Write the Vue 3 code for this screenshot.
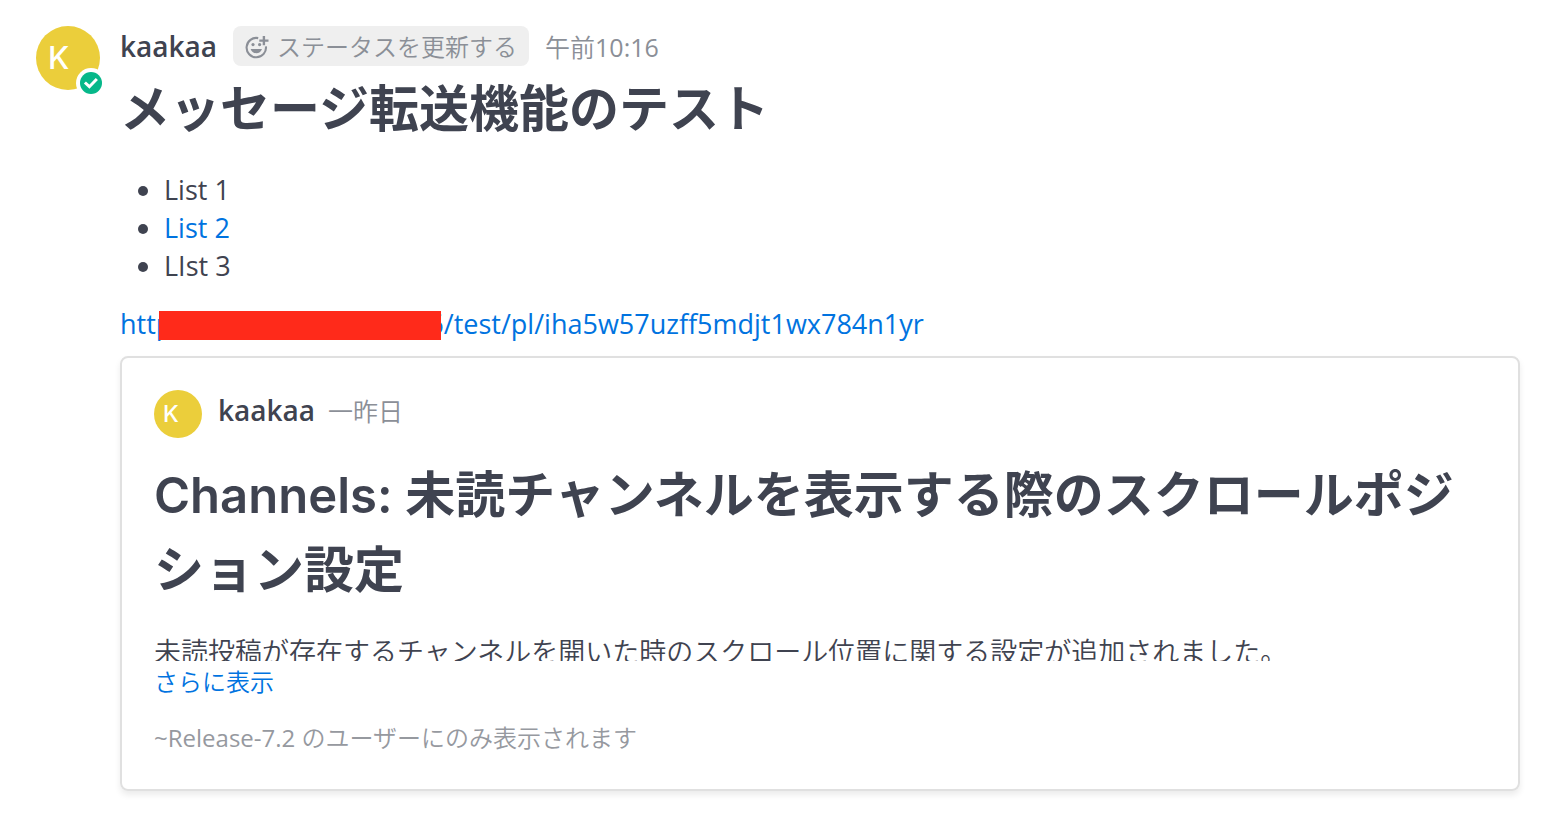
<script setup>
const items = [
  { text: 'List 1' },
  { text: 'List 2', href: '#list-2' },
  { text: 'LIst 3' },
]
</script>

<template>
  <main class="post">
    <div class="avatar">
      <span class="initial">K</span>
      <svg class="online" viewBox="0 0 30 30" role="img" aria-label="Online">
        <circle cx="15" cy="15" r="15" fill="#fff" />
        <circle cx="15" cy="15" r="11" fill="#06b88a" />
        <path d="M10 15.5l3.4 3.2 6.4-6.6" fill="none" stroke="#fff" stroke-width="3" stroke-linecap="square" stroke-linejoin="miter" />
      </svg>
    </div>
    <div class="content">
      <header class="head">
        <strong class="name">kaakaa</strong>
        <button class="status" type="button">
          <svg class="smile" viewBox="0 0 24 24" aria-hidden="true">
            <g fill="none" stroke="#8b8f97" stroke-width="2.1">
              <path d="M13.2 3.1A9.7 9.7 0 1 0 20.9 11.3" />
              <path d="M18.9 1v9.2M14.3 5.6h9.2" stroke-width="2.4" />
            </g>
            <circle cx="8" cy="9.6" r="1.6" fill="#8b8f97" />
            <circle cx="14.6" cy="9.6" r="1.6" fill="#8b8f97" />
            <path d="M5.6 13.9h11.4c-.9 2.7-3 4.3-5.7 4.3s-4.8-1.6-5.7-4.3z" fill="#8b8f97" />
          </svg>
          <span>ステータスを更新する</span>
        </button>
        <time class="time"><span class="kanji">午前</span>10:16</time>
      </header>
      <h1 class="title">メッセージ転送機能のテスト</h1>
      <ul class="list">
        <li v-for="item in items" :key="item.text">
          <a v-if="item.href" :href="item.href">{{ item.text }}</a>
          <template v-else>{{ item.text }}</template>
        </li>
      </ul>
      <p class="url"><a href="#permalink">http<span class="mask"></span>6/test/pl/iha5w57uzff5mdjt1wx784n1yr</a></p>
      <article class="card">
        <header class="card-head">
          <div class="avatar small"><span class="initial">K</span></div>
          <strong class="name">kaakaa</strong>
          <time class="time kanji">一昨日</time>
        </header>
        <div class="excerpt">
          <h1 class="title"><span class="latin">Channels:</span> 未読チャンネルを表示する際のスクロールポジション設定</h1>
          <p class="body kanji">未読投稿が存在するチャンネルを開いた時のスクロール位置に関する設定が追加されました。</p>
        </div>
        <button class="more" type="button">さらに表示</button>
        <footer class="foot">~Release-7.2 <span class="kanji">のユーザーにのみ表示されます</span></footer>
      </article>
    </div>
  </main>
</template>

<style>
body {
  margin: 0;
  background: #fff;
}
</style>

<style scoped>
.post {
  display: flex;
  gap: 20px;
  padding: 26px 42px 22px 36px;
  color: #3f4350;
  font-family: "Open Sans", "Noto Sans CJK JP", sans-serif;
  font-size: 27px;
  line-height: 38px;
}
.content {
  flex: 1;
  min-width: 0;
}
.avatar {
  position: relative;
  flex: none;
  box-sizing: border-box;
  width: 64px;
  height: 64px;
  padding-left: 12px;
  border-radius: 50%;
  background: #ebce3b;
  color: #fff;
  font-family: Inter, sans-serif;
  font-size: 31px;
  font-weight: 500;
  line-height: 64px;
}
.avatar.small {
  width: 48px;
  height: 48px;
  padding-left: 9px;
  font-size: 23px;
  line-height: 48px;
}
.online {
  position: absolute;
  right: -6px;
  bottom: -8px;
  width: 30px;
  height: 30px;
}
.head {
  display: flex;
  align-items: center;
  height: 40px;
}
.name {
  font-size: 28px;
  font-weight: 600;
  line-height: 40px;
}
.status {
  display: flex;
  align-items: center;
  gap: 8px;
  height: 40px;
  margin: 0 16px;
  padding: 2px 12px 0;
  border: 0;
  border-radius: 8px;
  background: #efefef;
  color: #8b8f97;
  font: inherit;
  font-size: 24px;
  font-weight: 350;
}
.smile {
  width: 24px;
  height: 24px;
}
.time {
  padding-top: 2px;
  color: #8b8f97;
  font-size: 25px;
}
.kanji {
  font-weight: 350;
}
.title {
  margin: 6px 0 24px;
  font-family: Inter, "Noto Sans CJK JP", sans-serif;
  font-size: 50px;
  font-weight: 600;
  line-height: 75px;
}
.latin {
  font-size: 49px;
}
.list {
  margin: 0 0 20px;
  padding-left: 44px;
}
a {
  color: #0073e0;
  text-decoration: none;
}
.url {
  margin: 0 0 13px;
  white-space: nowrap;
}
.mask {
  display: inline-block;
  position: relative;
  width: 282px;
  height: 29px;
  margin: 0 -13px;
  background: #ff2a1a;
  vertical-align: -6px;
}
.card {
  padding: 32px;
  border: 2px solid #e0e0e0;
  border-radius: 8px;
  box-shadow: 0 4px 6px rgba(0, 0, 0, 0.08);
}
.card-head {
  display: flex;
  align-items: flex-start;
  height: 48px;
}
.card-head .name {
  margin: 0 13px 0 16px;
}
.excerpt {
  height: 223px;
  overflow: hidden;
}
.excerpt .title {
  margin: 20px 0 25px;
}
.body {
  margin: 0;
}
.more {
  display: block;
  margin: 2px 0 0;
  padding: 0;
  border: 0;
  background: none;
  color: #0073e0;
  font: inherit;
  font-size: 24px;
  font-weight: 350;
}
.foot {
  margin-top: 18px;
  color: #96999f;
  font-size: 24px;
}
</style>
